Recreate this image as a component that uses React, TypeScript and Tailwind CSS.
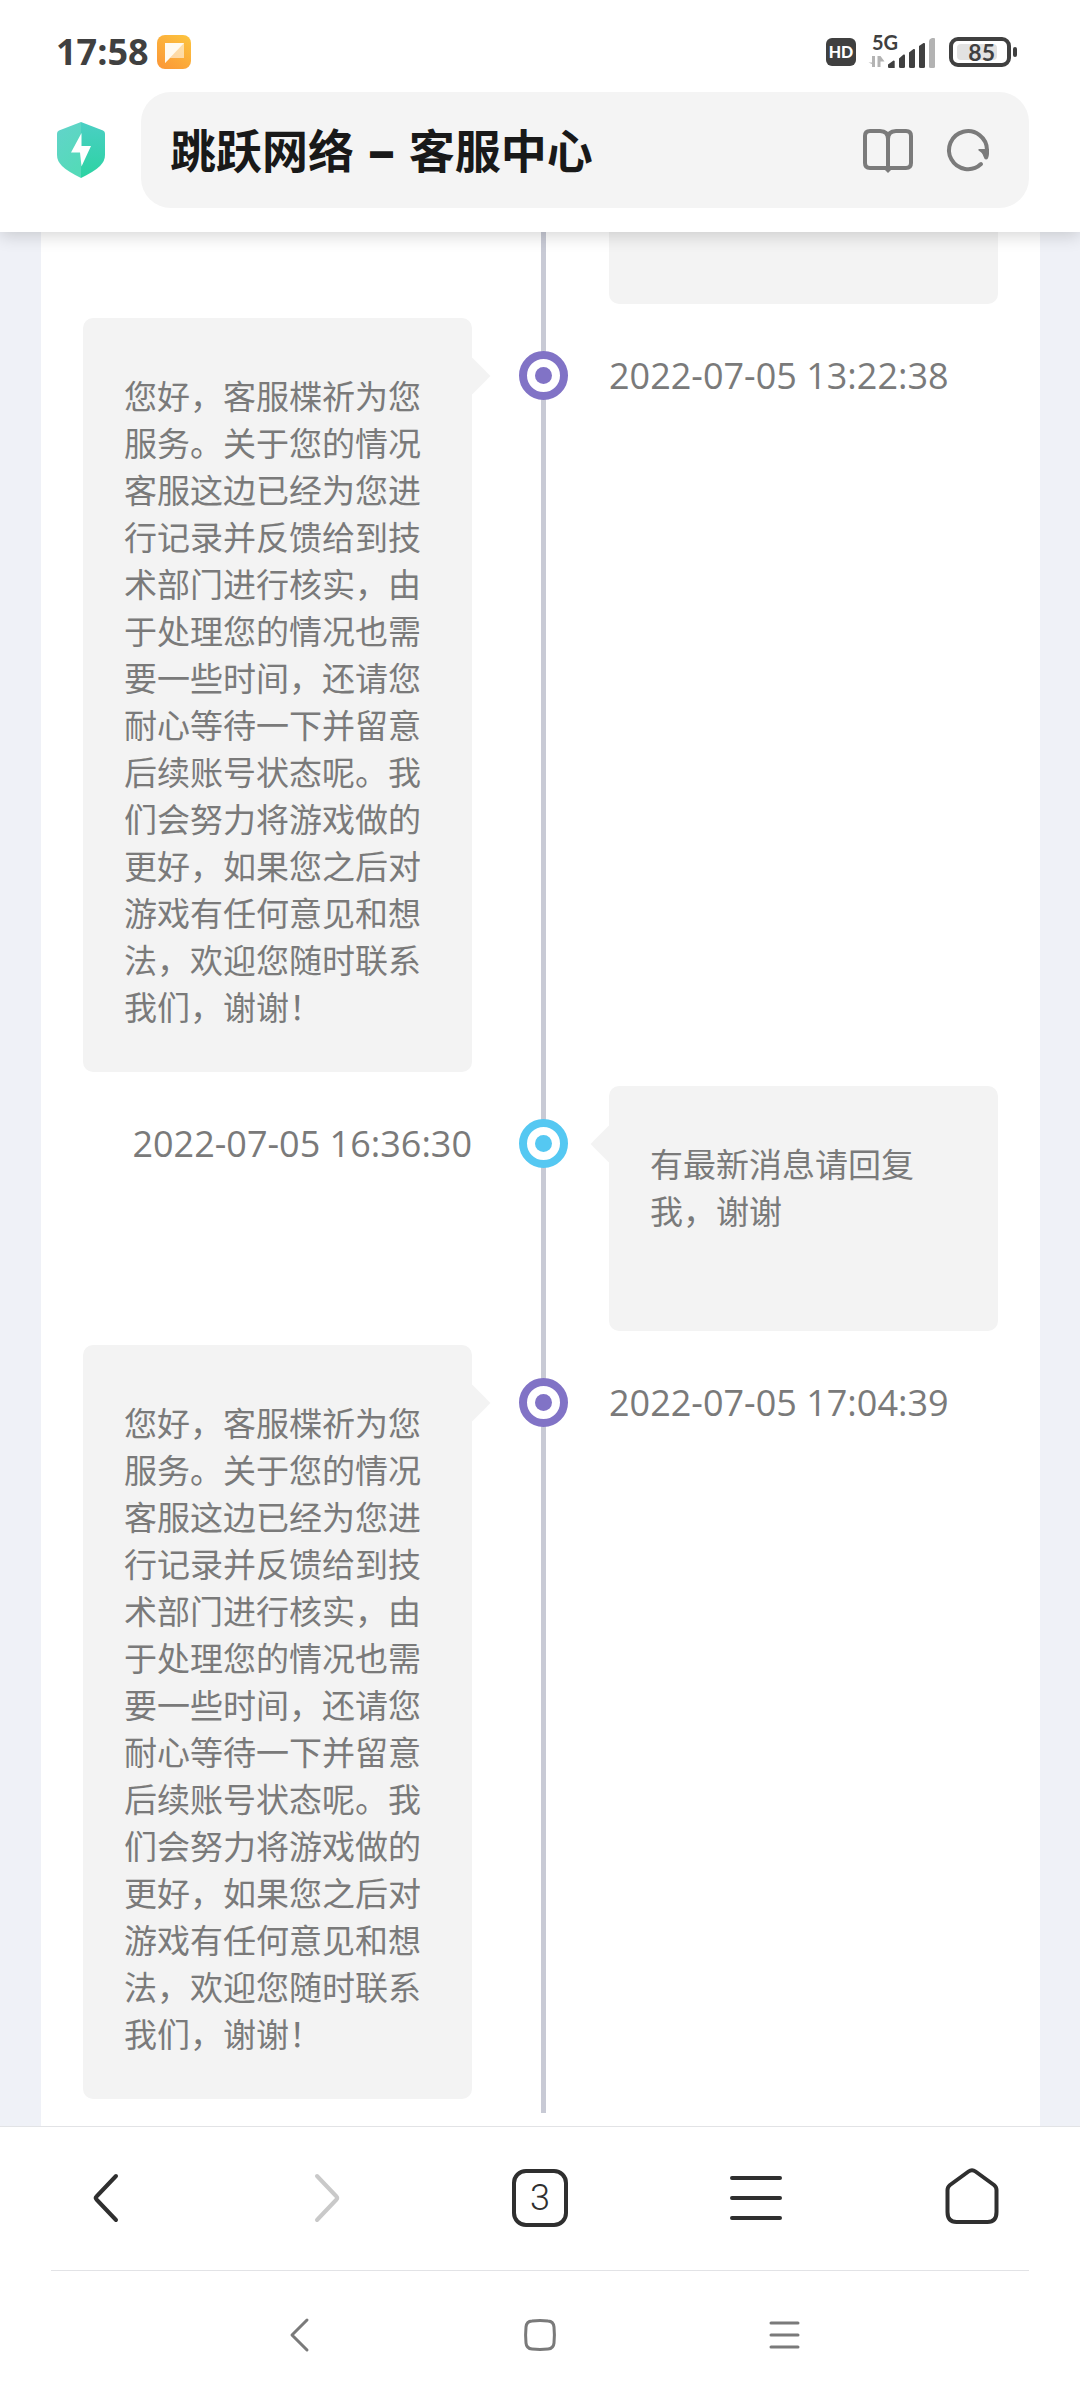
import React from "react";

type Side = "staff" | "player";

interface Entry {
  side: Side;
  time: string;
  text: string;
}

const STAFF_REPLY =
  "您好，客服楪祈为您服务。关于您的情况客服这边已经为您进行记录并反馈给到技术部门进行核实，由于处理您的情况也需要一些时间，还请您耐心等待一下并留意后续账号状态呢。我们会努力将游戏做的更好，如果您之后对游戏有任何意见和想法，欢迎您随时联系我们，谢谢！";

const ENTRIES: Entry[] = [
  { side: "staff", time: "2022-07-05 13:22:38", text: STAFF_REPLY },
  { side: "player", time: "2022-07-05 16:36:30", text: "有最新消息请回复我，谢谢" },
  { side: "staff", time: "2022-07-05 17:04:39", text: STAFF_REPLY },
];

function NoteAppIcon() {
  return (
    <svg width="34" height="34" viewBox="0 0 34 34" aria-hidden="true">
      <defs>
        <linearGradient id="note-bg" x1="1" y1="0" x2="0.3" y2="1">
          <stop offset="0" stopColor="#fcc53f" />
          <stop offset="1" stopColor="#fb9b38" />
        </linearGradient>
      </defs>
      <rect width="34" height="34" rx="8" fill="url(#note-bg)" />
      <path d="M8 8h19v15H13L8 28z" fill="#fff" fillOpacity="0.55" />
      <path d="M8 8h19L8 28z" fill="#fffaf0" />
    </svg>
  );
}

function SignalIcon() {
  return (
    <div className="relative h-[34px] w-[68px]">
      <span className="absolute left-1 top-0 text-[20px] font-bold leading-[16px]">5G</span>
      <svg width="68" height="34" viewBox="0 0 68 34" aria-hidden="true">
        <g fill="#b3b3b3">
          <path d="M7 22v11H4V30L.5 28.500H4V22zM9.500 33V22h3l4 5.500h-4V33z" />
          <path d="M61 7q0-2 3-3h2q1 0 1 1v27.500q0 1.500-1.500 1.500h-3Q61 34 61 32.500z" />
        </g>
        <g fill="#404040">
          <path d="M20 30.500 25.500 26.500q1.200 0 1.200 1V34H21q-1 0-1-1.500z" />
          <path d="M31 24.500 35.500 20.500q1.500-.5 1.500 1V32.500q0 1.500-1.500 1.500h-3Q31 34 31 32.500z" />
          <path d="M41 18.500 45.500 15q1.500-.5 1.500 1V32.500q0 1.500-1.500 1.500h-3Q41 34 41 32.500z" />
          <path d="M51 12 55.500 9q1.500-.5 1.500 1V32.500q0 1.500-1.500 1.500h-3Q51 34 51 32.500z" />
        </g>
      </svg>
    </div>
  );
}

function StatusBar() {
  return (
    <div className="flex h-[92px] items-start justify-between pl-14 pr-[63px] pt-[34px] font-[Lato,sans-serif] text-[#404040]">
      <div className="flex items-center gap-2">
        <time className="font-['Open_Sans',sans-serif] text-[36px] font-bold leading-[36px]">17:58</time>
        <NoteAppIcon />
      </div>
      <div className="flex items-start">
        <span className="mr-3 mt-1 flex h-7 w-[30px] items-center justify-center rounded-md bg-[#404040] text-[16px] font-black leading-[28px] text-white">
          HD
        </span>
        <SignalIcon />
        <div className="ml-[13px] mt-[3px] flex items-center gap-0.5">
          <div className="flex h-[30px] w-[62px] items-center rounded-[9px] border-4 border-[#404040] px-1">
            <span className="flex h-4 w-10 items-center justify-end rounded-sm bg-[#e2e2e2] pr-0.5 text-[23px] font-bold leading-[16px]">
              85
            </span>
          </div>
          <span className="h-2.5 w-1 rounded-sm bg-[#404040]" />
        </div>
      </div>
    </div>
  );
}

function ShieldIcon() {
  return (
    <svg width="48" height="56" viewBox="0 0 48 56" aria-hidden="true">
      <defs>
        <linearGradient id="shield-left" x1="0" y1="0" x2="0.4" y2="1">
          <stop offset="0" stopColor="#62d3cb" />
          <stop offset="1" stopColor="#55dab9" />
        </linearGradient>
        <linearGradient id="shield-right" x1="0" y1="0" x2="0" y2="1">
          <stop offset="0" stopColor="#4bcfc4" />
          <stop offset="1" stopColor="#2bd3a2" />
        </linearGradient>
      </defs>
      <path d="M24 0 2 8.500Q0 9.300 0 11.500V33q0 6 5 11 5 5 19 12z" fill="url(#shield-left)" />
      <path d="M24 0 46 8.500q2 .8 2 3V33q0 6-5 11-5 5-19 12z" fill="url(#shield-right)" />
      <path d="M24.500 11 14 30.500h9l1.500 14L34 24h-9.500z" fill="#fff" />
    </svg>
  );
}

function BookIcon() {
  return (
    <svg width="52" height="44" viewBox="0 0 52 44" className="overflow-visible" fill="none" stroke="#7b7b7b" strokeWidth="4" strokeLinejoin="round" aria-hidden="true">
      <path d="M26 41V11q0-8-8-8H8Q3 3 3 8v27q0 5 5 5h36q5 0 5-5V8q0-5-5-5H34q-8 0-8 8" />
      <path d="M22 41h8l-4 4z" fill="#7b7b7b" stroke="none" />
    </svg>
  );
}

function RefreshIcon() {
  return (
    <svg width="42" height="42" viewBox="0 0 42 42" className="overflow-visible" aria-hidden="true">
      <path d="M34 35A19 19 0 1 1 40 21" fill="none" stroke="#7b7b7b" strokeWidth="4" strokeLinecap="round" />
      <path d="M31.500 20H42v5q-.5 5.500-3 5.500-1.600 0-2.500-3-1-4-5-6z" fill="#7b7b7b" />
    </svg>
  );
}

function AddressBar() {
  return (
    <div className="flex items-center pb-6 pl-[57px] pr-[51px]">
      <button type="button" aria-label="安全" className="mr-9">
        <ShieldIcon />
      </button>
      <div className="flex h-[116px] min-w-0 flex-1 items-center rounded-[30px] bg-[#f4f4f4] pl-[29px] pr-10">
        <h1 className="flex-1 whitespace-nowrap pt-0.5 font-[Inter,'Noto_Sans_CJK_SC',sans-serif] text-[46px] font-bold leading-[72px] text-[#191919]">
          跳跃网络 <span className="mx-[5px] font-black">–</span> 客服中心
        </h1>
        <button type="button" aria-label="阅读模式">
          <BookIcon />
        </button>
        <button type="button" aria-label="刷新" className="ml-[33px]">
          <RefreshIcon />
        </button>
      </div>
    </div>
  );
}

function Marker({ side }: { side: Side }) {
  return (
    <div className="flex justify-center pl-1.5 pt-[33px]">
      <span
        className={
          side === "staff"
            ? "relative flex size-[49px] items-center justify-center rounded-full border-8 border-[#8173c6] bg-white"
            : "relative flex size-[49px] items-center justify-center rounded-full border-8 border-[#55c8f2] bg-white"
        }
      >
        <span className={side === "staff" ? "size-[17px] rounded-full bg-[#8173c6]" : "size-[17px] rounded-full bg-[#55c8f2]"} />
      </span>
    </div>
  );
}

function Bubble({ side, text }: { side: Side; text: string }) {
  return (
    <div className="relative min-h-[245px] rounded-[10px] bg-[#f3f3f3] px-[41px] pb-[42px] pt-[54px]">
      <span
        className={
          side === "staff"
            ? "absolute -right-[13px] top-[45px] size-[26px] rotate-45 bg-[#f3f3f3]"
            : "absolute -left-[13px] top-[45px] size-[26px] rotate-45 bg-[#f3f3f3]"
        }
      />
      <p className="relative">{text}</p>
    </div>
  );
}

function TimelineRow({ side, time, text }: Entry) {
  const stamp = (
    <time
      className={
        side === "staff"
          ? "pt-[34px] font-['Open_Sans',sans-serif] text-[36px]"
          : "pt-[34px] text-right font-['Open_Sans',sans-serif] text-[36px]"
      }
    >
      {time}
    </time>
  );
  const bubble = <Bubble side={side} text={text} />;
  return (
    <li className="grid grid-cols-[minmax(0,1fr)_137px_minmax(0,1fr)]">
      {side === "staff" ? bubble : stamp}
      <Marker side={side} />
      {side === "staff" ? stamp : bubble}
    </li>
  );
}

function BrowserNav() {
  return (
    <nav className="grid h-36 grid-cols-5 place-items-center border-t border-[#e2e3e6] pb-0.5 text-[#2f2f2f]">
      <button type="button" aria-label="后退">
        <svg width="56" height="60" viewBox="0 0 56 60" fill="none" stroke="currentColor" strokeWidth="4" strokeLinecap="round" strokeLinejoin="round">
          <path d="M36 8 16.500 28.500q-1.500 1.500 0 3L36 52" />
        </svg>
      </button>
      <button type="button" aria-label="前进" disabled className="text-[#c9c9c9]">
        <svg width="56" height="60" viewBox="0 0 56 60" fill="none" stroke="currentColor" strokeWidth="4" strokeLinecap="round" strokeLinejoin="round">
          <path d="M21 8 40.500 28.500q1.500 1.500 0 3L21 52" />
        </svg>
      </button>
      <button
        type="button"
        aria-label="标签页 3"
        className="flex h-[58px] w-14 items-center justify-center rounded-[14px] border-4 border-[#2f2f2f] font-[Roboto,sans-serif] text-[36px] font-light leading-[48px]"
      >
        3
      </button>
      <button type="button" aria-label="菜单">
        <svg width="56" height="60" viewBox="0 0 56 60" fill="none" stroke="currentColor" strokeWidth="4" strokeLinecap="round">
          <path d="M4 10h48M4 30h48M4 50h48" />
        </svg>
      </button>
      <button type="button" aria-label="主页">
        <svg width="56" height="60" viewBox="0 0 56 60" fill="none" stroke="currentColor" strokeWidth="4" strokeLinejoin="round">
          <path d="M24.500 3.500q3.500-2.600 7 0L50 17q2.500 2 2.500 5v22q0 10-9 10H12.500q-9 0-9-10V22q0-3 2.500-5z" />
        </svg>
      </button>
    </nav>
  );
}

function SystemNav() {
  return (
    <nav className="mx-[51px] flex h-[130px] items-center justify-center gap-[203px] border-t border-[#e2e3e6] pb-0.5 text-[#7a7a7a]">
      <button type="button" aria-label="返回">
        <svg width="40" height="40" viewBox="0 0 40 40" fill="none" stroke="currentColor" strokeWidth="3" strokeLinecap="round" strokeLinejoin="round">
          <path d="M30 5 15 20l15 15" />
        </svg>
      </button>
      <button type="button" aria-label="主屏幕">
        <svg width="40" height="40" viewBox="0 0 40 40" fill="none" stroke="currentColor" strokeWidth="3">
          <path d="M12 6q8-1 16 0 5.500.3 6 6 .8 8 0 16-.5 5.500-6 6-8 .8-16 0-5.500-.5-6-6-.8-8 0-16 .5-5.700 6-6z" />
        </svg>
      </button>
      <button type="button" aria-label="最近任务">
        <svg width="40" height="40" viewBox="0 0 40 40" fill="none" stroke="currentColor" strokeWidth="3" strokeLinecap="round">
          <path d="M8 8h27M8 20h27M8 32h27" />
        </svg>
      </button>
    </nav>
  );
}

export default function App() {
  return (
    <div className="flex min-h-screen flex-col bg-white">
      <header className="relative z-10 bg-white shadow-[0_4px_16px_rgba(0,0,0,0.16)]">
        <StatusBar />
        <AddressBar />
      </header>

      <main className="flex-1 bg-[#eff1f7] pl-[41px] pr-10 font-['Noto_Sans_CJK_SC',sans-serif] text-[33px] leading-[47px] text-[#7a7a7a]">
        <div className="h-full bg-white px-[42px] pb-[13px]">
          <ol className="relative flex flex-col gap-3.5 pb-3.5">
            <li aria-hidden="true" className="absolute inset-y-0 left-1/2 w-[5px] bg-[#c8cad5]" />
            <li className="grid grid-cols-[minmax(0,1fr)_137px_minmax(0,1fr)]">
              <div className="col-start-3 h-[72px] rounded-b-[10px] bg-[#f3f3f3]" />
            </li>
            {ENTRIES.map((entry) => (
              <TimelineRow key={entry.time} {...entry} />
            ))}
          </ol>
        </div>
      </main>

      <footer className="bg-white">
        <BrowserNav />
        <SystemNav />
      </footer>
    </div>
  );
}
